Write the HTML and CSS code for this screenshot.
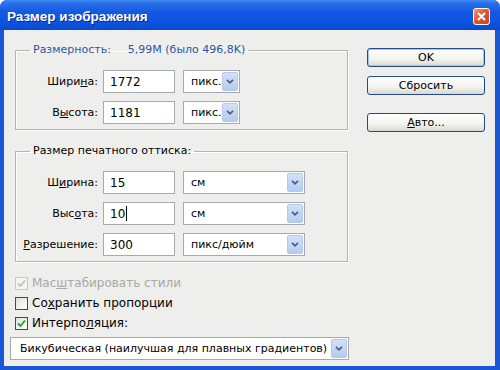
FILE: index.html
```html
<!DOCTYPE html>
<html lang="ru">
<head>
  <meta charset="UTF-8">
  <title>Размер изображения</title>
  <link rel="stylesheet" href="styles.css">
</head>
<body>
  <div class="window">
    <div class="titlebar">
      <span class="title">Размер изображения</span>
      <span class="close">
        <svg width="9" height="9" viewBox="0 0 9 9"><path d="M1 1 L8 8 M8 1 L1 8" stroke="#fff" stroke-width="2" fill="none"/></svg>
      </span>
    </div>

    <div class="client">
      <div class="main">
        <fieldset class="group">
          <legend class="legend-blue"><span>Размерность:</span><span class="legend-value">5,99M (было 496,8K)</span></legend>
          <div class="rows">
            <label class="lbl">Шири<u>н</u>а:</label>
            <div class="field">1772</div>
            <div class="select select-small"><span>пикс.</span><span class="arrow"><svg width="8" height="5" viewBox="0 0 8 5"><path d="M1 0.8 L4 3.8 L7 0.8" stroke="#4a5d86" stroke-width="1.7" fill="none"/></svg></span></div>

            <label class="lbl">В<u>ы</u>сота:</label>
            <div class="field">1181</div>
            <div class="select select-small"><span>пикс.</span><span class="arrow"><svg width="8" height="5" viewBox="0 0 8 5"><path d="M1 0.8 L4 3.8 L7 0.8" stroke="#4a5d86" stroke-width="1.7" fill="none"/></svg></span></div>
          </div>
        </fieldset>

        <fieldset class="group group-print">
          <legend>Размер печатного оттиска:</legend>
          <div class="rows">
            <label class="lbl">Ш<u>и</u>рина:</label>
            <div class="field">15</div>
            <div class="select select-wide"><span>см</span><span class="arrow"><svg width="8" height="5" viewBox="0 0 8 5"><path d="M1 0.8 L4 3.8 L7 0.8" stroke="#4a5d86" stroke-width="1.7" fill="none"/></svg></span></div>

            <label class="lbl">Выс<u>о</u>та:</label>
            <div class="field">10<span class="caret"></span></div>
            <div class="select select-wide"><span>см</span><span class="arrow"><svg width="8" height="5" viewBox="0 0 8 5"><path d="M1 0.8 L4 3.8 L7 0.8" stroke="#4a5d86" stroke-width="1.7" fill="none"/></svg></span></div>

            <label class="lbl"><u>Р</u>азрешение:</label>
            <div class="field">300</div>
            <div class="select select-wide"><span>пикс/дюйм</span><span class="arrow"><svg width="8" height="5" viewBox="0 0 8 5"><path d="M1 0.8 L4 3.8 L7 0.8" stroke="#4a5d86" stroke-width="1.7" fill="none"/></svg></span></div>
          </div>
        </fieldset>

        <div class="checks">
          <div class="check disabled">
            <span class="box"><svg width="9" height="9" viewBox="0 0 9 9"><path d="M1 4.5 L3.5 7 L8 1.5" stroke="#c3c3bd" stroke-width="1.8" fill="none"/></svg></span>
            <span>Мас<u>ш</u>табировать стили</span>
          </div>
          <div class="check">
            <span class="box"></span>
            <span>Со<u>х</u>ранить пропорции</span>
          </div>
          <div class="check">
            <span class="box"><svg width="9" height="9" viewBox="0 0 9 9"><path d="M1 4.5 L3.5 7 L8 1.5" stroke="#21a121" stroke-width="1.8" fill="none"/></svg></span>
            <span>Интерпо<u>л</u>яция:</span>
          </div>
        </div>

        <div class="select select-full"><span>Бикубическая (наилучшая для плавных градиентов)</span><span class="arrow"><svg width="8" height="5" viewBox="0 0 8 5"><path d="M1 0.8 L4 3.8 L7 0.8" stroke="#4a5d86" stroke-width="1.7" fill="none"/></svg></span></div>
      </div>

      <div class="buttons">
        <button class="btn btn-default">OK</button>
        <button class="btn">Сбросить</button>
        <button class="btn btn-auto"><u>А</u>вто...</button>
      </div>
    </div>
  </div>
</body>
</html>
```

FILE: styles.css
```css
body {
  margin: 0;
  background: #ffffff;
  font-family: "DejaVu Sans", Verdana, sans-serif;
  font-size: 11px;
  color: #000;
}

.window {
  width: 500px;
  height: 370px;
  box-sizing: border-box;
  display: flex;
  flex-direction: column;
  background: #1c55d6;
  border-radius: 7px 7px 0 0;
  overflow: hidden;
}

.titlebar {
  height: 30px;
  flex-shrink: 0;
  display: flex;
  align-items: center;
  justify-content: space-between;
  padding: 0 10px 0 7px;
  background: linear-gradient(#3f8cf3 0%, #2a6ee8 12%, #1559e3 40%, #0b53df 75%, #0a49cf 100%);
}

.title {
  color: #fff;
  font-family: "Liberation Sans", Arial, sans-serif;
  font-weight: bold;
  font-size: 13.5px;
  text-shadow: 1px 1px 0 #0a2a8a;
  margin-top: 3px;
}

.close {
  width: 17px;
  height: 17px;
  box-sizing: border-box;
  border: 1px solid #fff;
  border-radius: 3px;
  background: linear-gradient(135deg, #f29b7f, #e2572a 45%, #c9401a);
  display: flex;
  align-items: center;
  justify-content: center;
  margin-top: 3px;
}

.client {
  flex: 1;
  margin: 0 5px 4px 4px;
  background: #eeeeec;
  display: flex;
  padding: 13px 0 0 6px;
}

.main {
  width: 340px;
  display: flex;
  flex-direction: column;
}

.group {
  width: 333px;
  box-sizing: border-box;
  margin: 0 0 0 5px;
  padding: 13px 0 5px 0;
  border: 1px solid #b4b4ae;
  box-shadow: inset 1px 1px 0 #fff, 1px 1px 0 #fff;
}

.group legend {
  margin-left: 14px;
  padding: 0 3px;
  line-height: 14px;
}

.legend-blue {
  color: #2a55a4;
}

.legend-value {
  margin-left: 17px;
}

.group-print {
  margin-top: 14px;
  padding-bottom: 5px;
}

.rows {
  display: grid;
  grid-template-columns: 87px 72px auto;
  row-gap: 8px;
  align-items: center;
}

.lbl {
  text-align: right;
  padding-right: 5px;
}

.field {
  height: 23px;
  box-sizing: border-box;
  border: 1px solid #a5a9b0;
  background: #fff;
  padding-left: 6px;
  display: flex;
  align-items: center;
  font-size: 12px;
}

.caret {
  width: 1px;
  height: 15px;
  background: #000;
  margin-left: 1px;
}

.select {
  height: 23px;
  box-sizing: border-box;
  border: 1px solid #a5a9b0;
  background: #fff;
  display: flex;
  align-items: center;
  justify-content: space-between;
  padding: 1px 1px 1px 7px;
  margin-left: 8px;
}

.select-small {
  width: 57px;
}

.select-wide {
  width: 122px;
}

.select-full {
  width: 339px;
  margin: 4px 0 0 0;
  padding-left: 9px;
}

.arrow {
  width: 16px;
  height: 19px;
  box-sizing: border-box;
  border: 1px solid #b7c8e8;
  border-radius: 2px;
  background: linear-gradient(#d3e1f8, #b4cbf1);
  display: flex;
  align-items: center;
  justify-content: center;
}

.checks {
  margin-top: 11px;
  display: flex;
  flex-direction: column;
}

.check {
  height: 20px;
  display: flex;
  align-items: center;
  gap: 4px;
  padding-left: 5px;
  font-size: 12px;
}

.box {
  width: 13px;
  height: 13px;
  box-sizing: border-box;
  border: 1px solid #2b4b78;
  background: linear-gradient(135deg, #e0e0db, #fff);
  display: flex;
  align-items: center;
  justify-content: center;
}

.check.disabled {
  color: #a9a9a5;
}

.check.disabled .box {
  border-color: #c9c9c2;
  background: #f4f4f2;
}

.buttons {
  margin: 5px 0 0 17px;
  display: flex;
  flex-direction: column;
  gap: 9px;
}

.btn {
  width: 118px;
  height: 19px;
  border: 1px solid #234a8c;
  border-radius: 3px;
  background: linear-gradient(#ffffff, #f3f3ef 60%, #d9d8d0);
  font-family: "DejaVu Sans", Verdana, sans-serif;
  font-size: 11px;
  color: #000;
  padding: 0;
}

.btn-default {
  box-shadow: inset 0 0 0 1px #a9c4ee;
}

.btn-auto {
  margin-top: 9px;
}
```
